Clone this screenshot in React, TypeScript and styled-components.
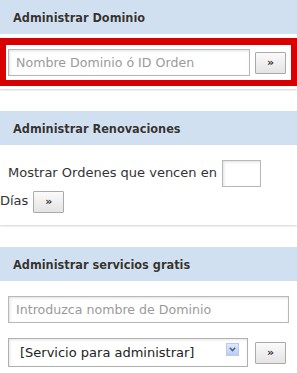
import styled, { createGlobalStyle } from 'styled-components'

const GlobalStyle = createGlobalStyle`
  html, body {
    margin: 0;
    padding: 0;
    background: #ffffff;
  }

  body {
    font-family: 'DejaVu Sans', Verdana, sans-serif;
    font-size: 13px;
    color: #333333;
  }
`

const Sidebar = styled.div`
  width: 297px;
  display: flex;
  flex-direction: column;
  gap: 22px;
`

const Panel = styled.section`
  background: #ffffff;
  box-shadow: 0 1px 2px rgba(0, 0, 0, 0.18);
`

const PanelTitle = styled.h3`
  margin: 0;
  height: 34px;
  padding: 0 13px;
  display: flex;
  align-items: center;

  background-color: #d0e0f0;
  color: #333333;
  font-family: 'DejaVu Sans Condensed', 'DejaVu Sans', sans-serif;
  font-size: 12.6px;
  font-weight: bold;
  text-shadow: 0 0 1px rgba(255, 255, 255, 0.9);
`

const PanelBody = styled.div<{ pad: string }>`
  padding: ${({ pad }) => pad};
`

const Highlight = styled.form`
  display: flex;
  align-items: center;
  gap: 5px;
  margin: 0;
  height: 48px;
  box-sizing: border-box;
  padding: 0 4px 0 2px;

  border: 6px solid #d80000;
  border-top-width: 7px;
`

const TextBox = styled.input<{ w: number }>`
  box-sizing: border-box;
  width: ${({ w }) => w}px;
  height: 27px;
  padding: 0 7px;

  border: 1px solid #b8b8b8;
  box-shadow: inset 1px 1px 3px rgba(0, 0, 0, 0.12);
  background: #ffffff;
  outline: none;

  font-family: 'DejaVu Sans', sans-serif;
  font-size: 12.6px;
  color: #333333;

  &::placeholder {
    color: #9a9a9a;
  }
`

const GoButton = styled.button`
  box-sizing: border-box;
  width: 31px;
  height: 22px;
  padding: 0;

  display: flex;
  align-items: center;
  justify-content: center;

  border: 1px solid #aaaaaa;
  border-radius: 1px;
  background: linear-gradient(#fafafa, #e4e4e4);
  color: #333333;
  font-family: 'DejaVu Sans', sans-serif;
  font-size: 11px;
  font-weight: bold;
  cursor: pointer;
`

const Renewals = styled.p`
  margin: 0;
  line-height: 27px;
  text-indent: 8px;
  color: #333333;
`

const InlineBox = styled(TextBox)`
  vertical-align: middle;
  margin-left: 5px;
  text-indent: 0;
`

const InlineButton = styled(GoButton)`
  display: inline-flex;
  vertical-align: middle;
  margin-left: 5px;
  text-indent: 0;
`

const Stack = styled.div`
  display: flex;
  flex-direction: column;
  gap: 15px;
`

const Row = styled.div`
  display: flex;
  align-items: center;
  gap: 7px;
`

const SelectWrap = styled.div`
  position: relative;
  width: 240px;
  height: 29px;
`

const Select = styled.select`
  box-sizing: border-box;
  width: 100%;
  height: 100%;
  padding: 0 22px 0 11px;
  appearance: none;

  border: 1px solid #b0b0b0;
  box-shadow: inset 1px 1px 3px rgba(0, 0, 0, 0.1);
  background: #ffffff;
  outline: none;

  font-family: 'DejaVu Sans', sans-serif;
  font-size: 13px;
  color: #222222;
`

const SelectArrow = styled.span`
  position: absolute;
  top: 5px;
  right: 9px;
  width: 11px;
  height: 11px;
  pointer-events: none;

  display: flex;
  align-items: center;
  justify-content: center;

  border: 1px solid #b9c9ef;
  background: linear-gradient(#dfe8fb, #bccdf3);
`

function Chevron() {
  return (
    <svg width="7" height="5" viewBox="0 0 7 5">
      <path d="M0.8 0.8 L3.5 3.6 L6.2 0.8" fill="none" stroke="#4d6185" strokeWidth="1.6" />
    </svg>
  )
}

function App() {
  return (
    <>
      <GlobalStyle />
      <Sidebar>
        <Panel>
          <PanelTitle>Administrar Dominio</PanelTitle>
          <PanelBody pad="4px 0 3px">
            <Highlight onSubmit={(e) => e.preventDefault()}>
              <TextBox w={242} placeholder="Nombre Dominio ó ID Orden" />
              <GoButton type="submit">»</GoButton>
            </Highlight>
          </PanelBody>
        </Panel>

        <Panel>
          <PanelTitle>Administrar Renovaciones</PanelTitle>
          <PanelBody pad="14px 0 11px">
            <Renewals>
              Mostrar Ordenes que vencen en
              <InlineBox w={39} />
              <br />
              Días
              <InlineButton>»</InlineButton>
            </Renewals>
          </PanelBody>
        </Panel>

        <Panel>
          <PanelTitle>Administrar servicios gratis</PanelTitle>
          <PanelBody pad="15px 8px 14px">
            <Stack>
              <TextBox w={281} placeholder="Introduzca nombre de Dominio" />
              <Row>
                <SelectWrap>
                  <Select defaultValue="">
                    <option value="">[Servicio para administrar]</option>
                  </Select>
                  <SelectArrow>
                    <Chevron />
                  </SelectArrow>
                </SelectWrap>
                <GoButton>»</GoButton>
              </Row>
            </Stack>
          </PanelBody>
        </Panel>
      </Sidebar>
    </>
  )
}

export default App
